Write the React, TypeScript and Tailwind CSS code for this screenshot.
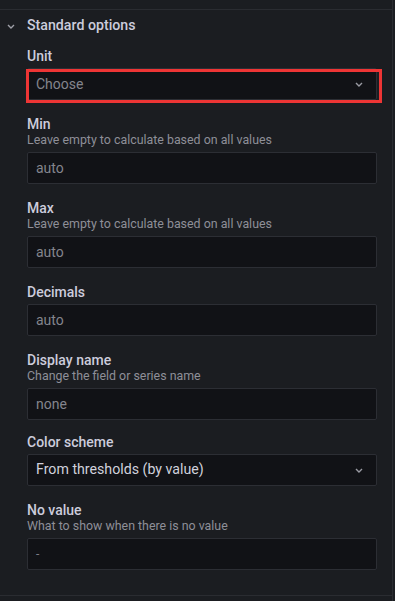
import { ReactNode } from "react";

function Chevron({ className }: { className?: string }) {
  return (
    <svg width="8" height="5" viewBox="0 0 8 5" className={className}>
      <polyline points="1,1 4,4 7,1" fill="none" stroke="currentColor" strokeWidth="1.4" />
    </svg>
  );
}

type FieldProps = {
  label: string;
  desc?: string;
  children: ReactNode;
  tight?: boolean;
};

function Field({ label, desc, children, tight }: FieldProps) {
  return (
    <div className={tight ? "flex flex-col mb-[14px]" : "flex flex-col mb-4"}>
      <div className="text-[14px] leading-[16px] font-medium text-[#ccccdc]">{label}</div>
      {desc && <div className="text-[12.4px] leading-[16px] text-[#8e8f98]">{desc}</div>}
      <div className="mt-1">{children}</div>
    </div>
  );
}

function TextInput({ placeholder, small }: { placeholder: string; small?: boolean }) {
  return (
    <div className="h-8 flex items-center px-2 bg-[#111216] border border-[#2c2e34] rounded-[2px]">
      <span className={small ? "text-[12px] text-[#7d7e86]" : "text-[14px] text-[#84858d]"}>{placeholder}</span>
    </div>
  );
}

function SelectBox({ value, placeholder }: { value?: string; placeholder?: string }) {
  return (
    <div className="h-8 flex items-center justify-between pl-2 pr-[13px] bg-[#111216] border border-[#2c2e34] rounded-[2px]">
      {value ? (
        <span className="text-[14.2px] text-[#d0d1dc]">{value}</span>
      ) : (
        <span className="text-[14px] text-[#84858d]">{placeholder}</span>
      )}
      <Chevron className="text-[#9a9ba3]" />
    </div>
  );
}

export default function App() {
  return (
    <div
      className="w-[395px] h-[601px] bg-[#1b1d21] flex overflow-hidden"
      style={{ fontFamily: "Roboto, 'Liberation Sans', sans-serif" }}
    >
      <div className="w-[392px] flex flex-col">
        <div className="h-[9px] shrink-0" />
        <div className="border-t border-b border-[#2a2c31] h-[587px] flex flex-col">
          <div className="h-[28px] pt-[3px] flex items-center shrink-0">
            <div className="w-[27px] flex justify-center pr-[6px] pt-[2px]">
              <Chevron className="text-[#9fa0a8]" />
            </div>
            <span className="text-[14.2px] font-medium text-[#ccccdc]">Standard options</span>
          </div>
          <div className="pt-[10px] pl-[27px] pr-[15px]">
            <Field label="Unit">
              <div className="relative">
                <SelectBox placeholder="Choose" />
                <div className="absolute left-[-1px] top-[1px] w-[356px] h-[34px] border-[3px] border-[#ee3535] pointer-events-none" />
              </div>
            </Field>
            <Field label="Min" desc="Leave empty to calculate based on all values">
              <TextInput placeholder="auto" />
            </Field>
            <Field label="Max" desc="Leave empty to calculate based on all values">
              <TextInput placeholder="auto" />
            </Field>
            <Field label="Decimals">
              <TextInput placeholder="auto" />
            </Field>
            <Field label="Display name" desc="Change the field or series name" tight>
              <TextInput placeholder="none" />
            </Field>
            <Field label="Color scheme">
              <SelectBox value="From thresholds (by value)" />
            </Field>
            <Field label="No value" desc="What to show when there is no value">
              <TextInput placeholder="-" small />
            </Field>
          </div>
        </div>
      </div>
      <div className="flex-1 border-l border-[#2a2c31]" />
    </div>
  );
}
